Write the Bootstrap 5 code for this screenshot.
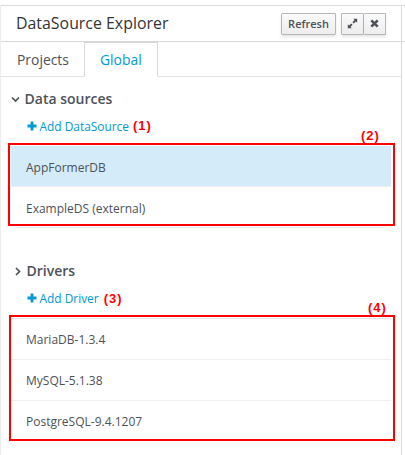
<!DOCTYPE html>
<html lang="en">
<head>
<meta charset="utf-8">
<meta name="viewport" content="width=device-width, initial-scale=1">
<title>DataSource Explorer</title>
<link href="https://cdn.jsdelivr.net/npm/bootstrap@5.3.0/dist/css/bootstrap.min.css" rel="stylesheet">
<style>
body{font-family:"Open Sans","Noto Sans",sans-serif;font-size:12px;line-height:20px;color:#4d5258;background:#fff;height:455px;overflow:hidden}
.explorer{position:relative;width:402px;height:450px;margin-top:5px;border-left:1px solid #ededed;border-right:1px solid #d9d9d9}
.explorer::before{content:"";position:absolute;left:0;right:-4px;top:0;border-top:1px solid #d9d9d9}
.panel-head{height:37px;border-bottom:1px solid #d9d9d9;padding:1px 15px 0;margin-right:-4px}
.panel-title{font-size:15.9px;line-height:24px;color:#333;margin:-1px 0 0}
.tool{height:22px;font-family:inherit;font-size:11px;font-weight:600;line-height:19px;color:#4d5258;padding:0 7px;border:1px solid #b7b7b7;border-radius:1px;background:linear-gradient(#fafafa,#ededed);box-shadow:0 2px 3px rgba(3,3,3,.1)}
.tool-text{width:55px;padding:0}
.tool svg{display:block}
.tool-icon{width:23px;padding:0;display:flex;align-items:center;justify-content:center}
.tool-close{width:22px}
.tools{margin-right:4px}
.tool-pair{margin-left:5px}
.source-tabs{height:35px;border-bottom:1px solid #e4e4e4;font-size:13.9px}
.source-tabs .nav-link{height:35px;border-radius:0;padding:6px 15px 0;line-height:21px;color:#4d5258;border:1px solid transparent;margin:0}
.source-tabs .nav-link.active{color:#0099d3;border-color:#d4d4d4 #d9d9d9 #fff;width:74px}
.source-tabs .first-tab{width:83px}
.section-title{font-size:14px;font-weight:600;line-height:20px;margin:0}
.head-one{padding-left:10px}
.head-two{padding-left:12px}
.chev{margin-right:4.5px}
.plus{margin-right:2.5px}
.add-link{color:#0099d3;text-decoration:none;font-size:11.9px}
.note{font-family:"Liberation Sans",Arial,sans-serif;font-weight:700;font-size:13px;letter-spacing:1px;line-height:14px;color:#f00}
.note-one{margin-left:4px}
.note-three{margin:2px 0 0 5px}
.entries{width:380px;margin-left:10px}
.entries .list-group-item{height:41px;padding:12px 15px 0;line-height:20px;color:#4d5258;border:0;border-bottom:1px solid #f0f0f0;border-radius:0;background:#fff}
.entries .list-group-item.picked{background:#d4ebf9}
.marked{position:relative}
.marked::after{content:"";position:absolute;z-index:2;border:2px solid #f00;pointer-events:none}
.mark-sources::after{left:7px;top:-3px;width:387px;height:83px}
.mark-drivers::after{left:8px;top:-3px;width:386px;height:126px}
.mark-drivers .entries{border-top:1px solid #e4e4e4;border-radius:0}
.mark-drivers .list-group-item{padding-top:11px}
.mark-drivers .list-group-item:last-child{border-bottom:0;height:40px}
.corner-note{position:absolute;top:-17px}
.at-two{left:360px}
.at-four{left:367px}
.sources{padding-top:12px}
.drivers{padding-top:33px}
.add-row{height:20px;margin:7px 0 10px;padding-left:26px}
</style>
<script src="https://cdn.jsdelivr.net/npm/bootstrap@5.3.0/dist/js/bootstrap.bundle.min.js"></script>
</head>
<body>
<main class="explorer">
  <header class="panel-head d-flex align-items-center justify-content-between">
    <h1 class="panel-title fw-normal">DataSource Explorer</h1>
    <div class="tools d-flex">
      <button class="tool tool-text btn">Refresh</button>
      <div class="tool-pair d-flex">
        <button class="tool tool-icon btn" aria-label="Expand"><svg width="11" height="11" viewBox="0 0 11 11" fill="#4d5258"><path d="M6.2.8h4v4L8.9 3.5 6.8 5.6 5.4 4.2l2.1-2.1zM.8 6.2v4h4L3.5 8.9l2.1-2.1-1.4-1.4-2.1 2.1z"/></svg></button>
        <button class="tool tool-icon tool-close btn border-start-0" aria-label="Close"><svg width="9" height="9" viewBox="0 0 9 9"><path d="M1.3 1.3l6.4 6.4M7.7 1.3L1.3 7.7" stroke="#4d5258" stroke-width="2.6"/></svg></button>
      </div>
    </div>
  </header>
  <nav class="source-tabs nav">
    <a class="nav-link first-tab" href="#">Projects</a>
    <a class="nav-link active" href="#">Global</a>
  </nav>
  <section class="sources">
    <div class="d-flex align-items-center head-one">
      <svg class="chev" width="9" height="9" viewBox="0 0 9 9"><path d="M1 2.5L4.5 6 8 2.5" fill="none" stroke="#4d5258" stroke-width="1.7"/></svg>
      <h2 class="section-title">Data sources</h2>
    </div>
    <div class="add-row d-flex align-items-center">
      <a class="add-link d-flex align-items-center" href="#"><svg class="plus" width="10" height="10" viewBox="0 0 10 10"><path d="M5 .5v9M.5 5h9" stroke="#0099d3" stroke-width="2.8"/></svg>Add DataSource</a>
      <span class="note note-one">(1)</span>
    </div>
    <div class="marked mark-sources">
      <span class="note corner-note at-two">(2)</span>
      <ul class="entries list-group">
        <li class="list-group-item picked">AppFormerDB</li>
        <li class="list-group-item">ExampleDS (external)</li>
      </ul>
    </div>
  </section>
  <section class="drivers">
    <div class="d-flex align-items-center head-two">
      <svg class="chev" width="9" height="9" viewBox="0 0 9 9"><path d="M3 1l3.5 3.5L3 8" fill="none" stroke="#4d5258" stroke-width="1.7"/></svg>
      <h2 class="section-title">Drivers</h2>
    </div>
    <div class="add-row d-flex align-items-center">
      <a class="add-link d-flex align-items-center" href="#"><svg class="plus" width="10" height="10" viewBox="0 0 10 10"><path d="M5 .5v9M.5 5h9" stroke="#0099d3" stroke-width="2.8"/></svg>Add Driver</a>
      <span class="note note-three">(3)</span>
    </div>
    <div class="marked mark-drivers">
      <span class="note corner-note at-four">(4)</span>
      <ul class="entries list-group">
        <li class="list-group-item">MariaDB-1.3.4</li>
        <li class="list-group-item">MySQL-5.1.38</li>
        <li class="list-group-item">PostgreSQL-9.4.1207</li>
      </ul>
    </div>
  </section>
</main>
</body>
</html>
